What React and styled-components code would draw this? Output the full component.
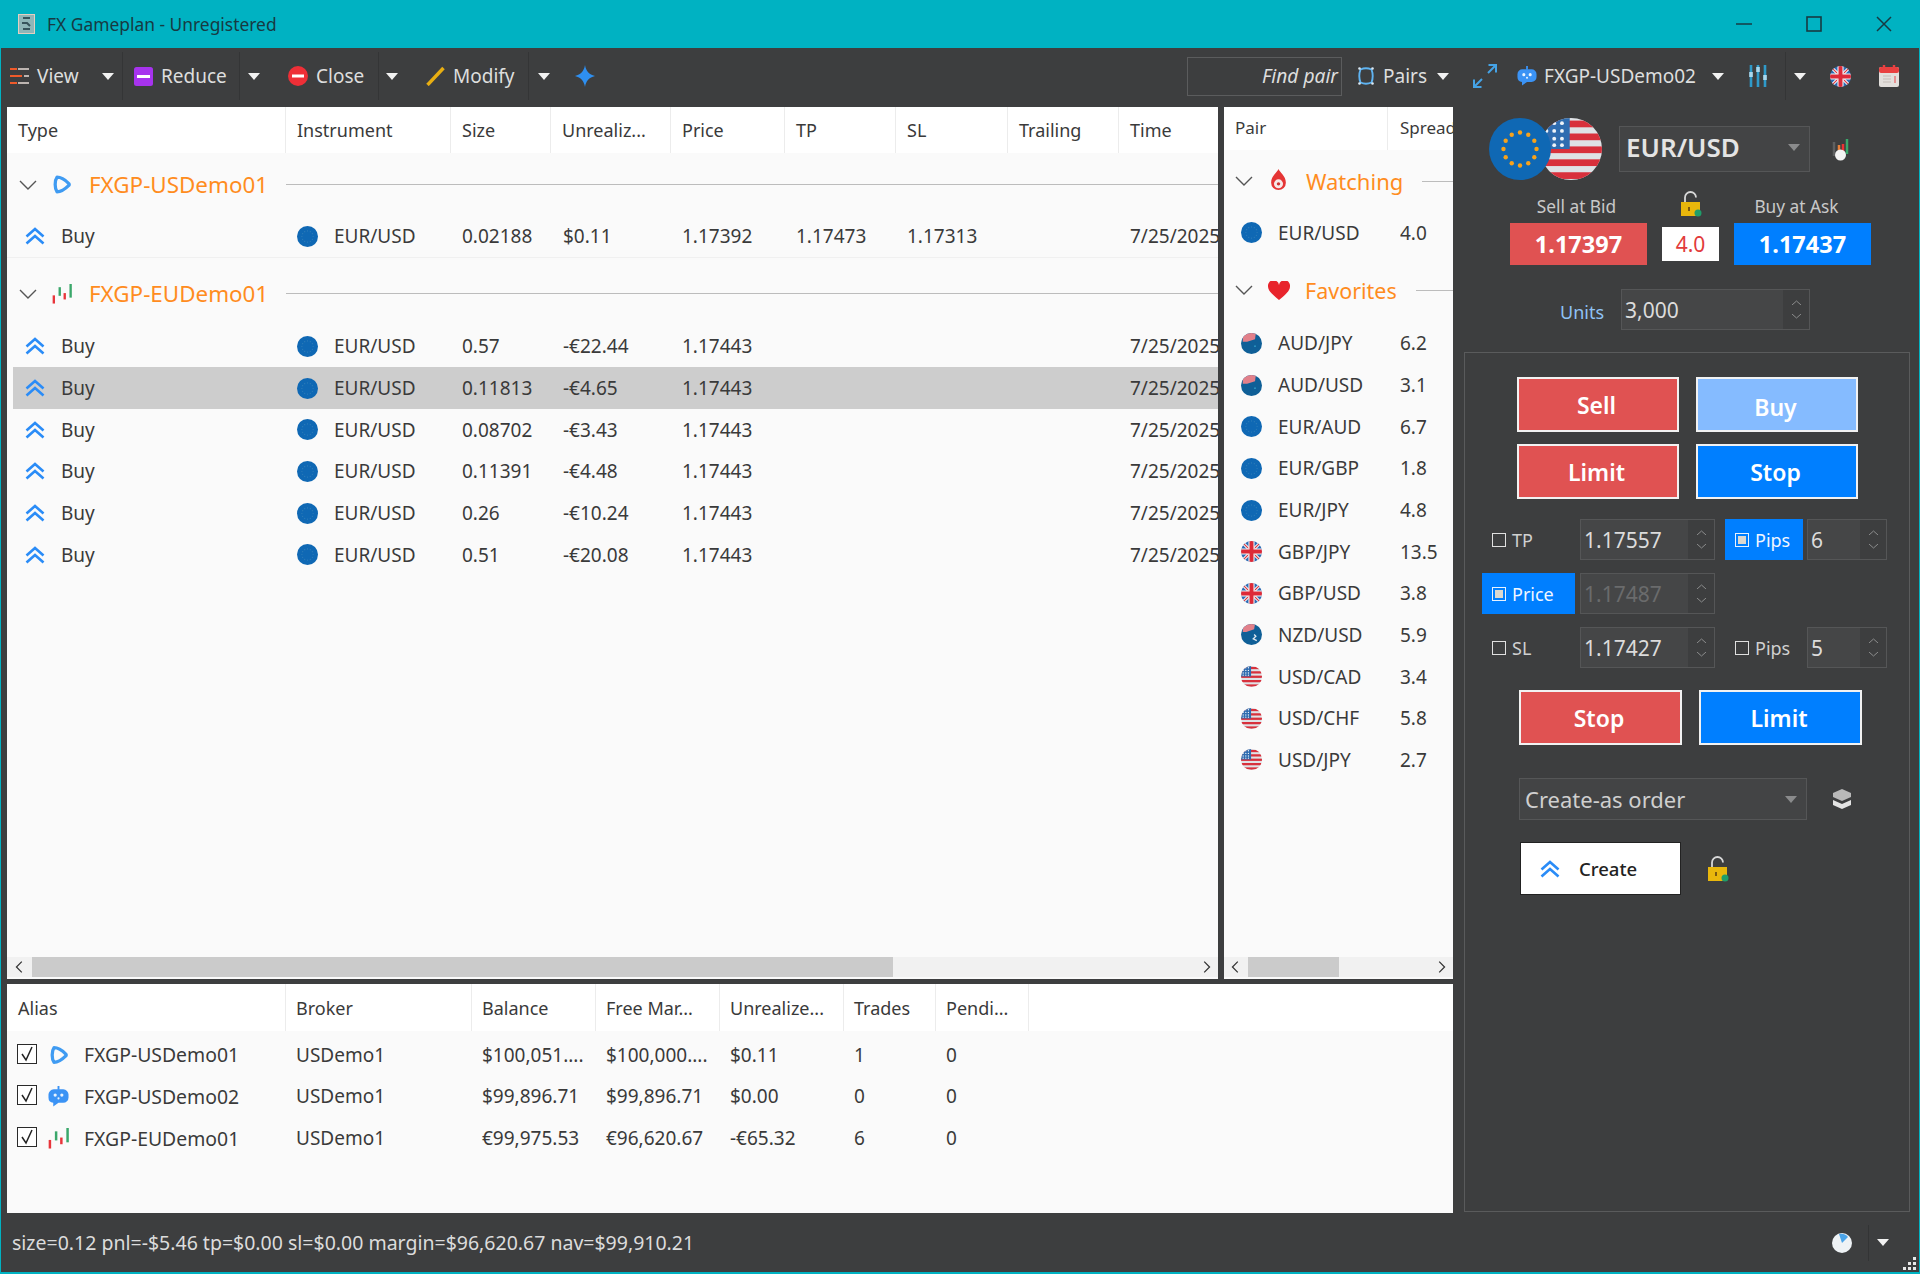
import React from 'react';
import styled, { createGlobalStyle } from 'styled-components';

const GlobalStyle = createGlobalStyle`
  html, body { margin: 0; padding: 0; background: #00b2c2; }
  * { box-sizing: border-box; }
  body { font-family: "Noto Sans", "Open Sans", sans-serif; }
`;

const Root = styled.div`
  width: 1920px;
  height: 1274px;
  background: #00b2c2;
  padding: 0 1px 2px 1px;
  display: flex;
  flex-direction: column;
  overflow: hidden;
`;

const TitleBar = styled.div`
  height: 48px;
  flex: none;
  display: flex;
  align-items: center;
  padding-left: 17px;
  color: #173a42;
  font-size: 17.4px;
`;

const TitleText = styled.span`
  margin-left: 12px;
  white-space: nowrap;
  margin-right: auto;
`;

const WinButton = styled.div`
  flex: none;
  width: 70px;
  display: flex;
  justify-content: center;
`;

const Window = styled.div`
  flex: 1;
  min-height: 0;
  background: #3d3e3f;
  display: flex;
  flex-direction: column;
  color: #dedede;
`;

const Toolbar = styled.div`
  height: 58px;
  flex: none;
  display: flex;
  align-items: center;
  font-size: 19px;
  padding-bottom: 2px;
`;

const ToolButton = styled.div`
  flex: none;
  height: 48px;
  display: flex;
  align-items: center;
  width: ${p => (p.$w ? `${p.$w}px` : 'auto')};
  margin-left: ${p => p.$ml || 0}px;
  padding-left: ${p => p.$pl || 0}px;
  gap: ${p => p.$gap ?? 8}px;
  border-right: ${p => (p.$sep ? '1px solid #343536' : 'none')};
`;

const Caret = styled.span`
  flex: none;
  width: 0;
  height: 0;
  border-left: 6px solid transparent;
  border-right: 6px solid transparent;
  border-top: 7px solid ${p => p.$color || '#f2f2f2'};
  margin-left: ${p => p.$ml || 0}px;
`;

const FindPair = styled.div`
  width: 155px;
  height: 39px;
  margin-left: 592px;
  border: 1px solid #5b5c5d;
  font-style: italic;
  font-size: 19.2px;
  text-align: right;
  line-height: 36px;
  padding-right: 3px;
  flex: none;
`;

const Main = styled.div`
  flex: 1;
  min-height: 0;
  display: flex;
`;

const Tables = styled.div`
  width: 1452px;
  flex: none;
  padding-left: 6px;
  padding-top: 1px;
  display: flex;
  flex-direction: column;
  gap: 5px;
`;

const TopTables = styled.div`
  height: 872px;
  flex: none;
  display: flex;
  gap: 6px;
`;

const Panel = styled.div`
  background: #fafafa;
  color: #3a3a3a;
  display: flex;
  flex-direction: column;
  overflow: hidden;
  width: ${p => (p.$w ? `${p.$w}px` : 'auto')};
  flex: ${p => (p.$w ? 'none' : '1')};
  font-size: 19px;
  min-height: 0;
`;

const HeadRow = styled.div`
  height: ${p => p.$h}px;
  flex: none;
  display: flex;
  background: #fff;
`;

const HeadCell = styled.div`
  flex: none;
  width: ${p => p.$w}px;
  padding-left: ${p => p.$pl ?? 11}px;
  padding-bottom: ${p => p.$pb || 0}px;
  display: flex;
  align-items: center;
  border-right: ${p => (p.$last ? 'none' : '1px solid #ececec')};
  white-space: nowrap;
  overflow: hidden;
  font-size: ${p => p.$size || 18}px;
  color: #3a3a3a;
`;

const Body = styled.div`
  flex: 1;
  min-height: 0;
  overflow: hidden;
  padding-top: ${p => p.$pt || 0}px;
`;

const GroupRow = styled.div`
  height: ${p => p.$h}px;
  padding-left: ${p => p.$pl}px;
  padding-top: ${p => p.$pt || 0}px;
  display: flex;
  align-items: center;
`;

const GroupIcon = styled.div`
  flex: none;
  display: flex;
  justify-content: center;
  width: ${p => p.$w}px;
  margin-left: ${p => p.$ml}px;
`;

const GroupLabel = styled.span`
  color: #ff8c1e;
  font-size: ${p => p.$size}px;
  margin-left: ${p => p.$ml}px;
  white-space: nowrap;
`;

const GroupLine = styled.div`
  flex: 1;
  height: 1px;
  background: #bcbcbc;
  margin-left: ${p => p.$ml}px;
`;

const AccountName = styled.span`
  font-size: 19.4px;
  margin-left: 15px;
`;

const Row = styled.div`
  height: 41.65px;
  display: flex;
  align-items: center;
  background: ${p => (p.$selected ? '#cdcdcd' : 'transparent')};
  border-bottom: ${p => (p.$rule ? '1px solid #f0f0f0' : 'none')};
  margin-left: ${p => p.$ml || 0}px;
`;

const Cell = styled.div`
  flex: none;
  width: ${p => p.$w}px;
  padding-left: ${p => p.$pl ?? 11}px;
  display: flex;
  align-items: center;
  gap: ${p => p.$gap || 0}px;
  white-space: nowrap;
  overflow: hidden;
`;

const ScrollBar = styled.div`
  height: 20px;
  flex: none;
  margin-bottom: 2px;
  display: flex;
  align-items: center;
  background: #f1f1f1;
`;

const ScrollEnd = styled.div`
  width: ${p => p.$w}px;
  flex: none;
  display: flex;
  justify-content: center;
`;

const ScrollThumb = styled.div`
  height: 100%;
  width: ${p => p.$w}px;
  background: #cbcbcb;
  flex: none;
`;

const ScrollRest = styled.div`
  flex: 1;
`;

const Check = styled.div`
  flex: none;
  width: 20px;
  height: 20px;
  border: 1.5px solid #2a2a2a;
  background: #fff;
  display: flex;
  align-items: center;
  justify-content: center;
  margin-top: -2px;
`;

const Ticket = styled.div`
  flex: 1;
  min-width: 0;
  padding-left: 11px;
  display: flex;
  flex-direction: column;
`;

const PairRow = styled.div`
  display: flex;
  align-items: center;
  height: 62px;
  margin-top: 12px;
  padding-left: 25px;
`;

const FlagPair = styled.div`
  display: flex;
  width: 113px;
  flex: none;
`;

const FlagOver = styled.div`
  flex: none;
  margin-right: -11px;
  z-index: 1;
`;

const Combo = styled.div`
  flex: none;
  height: ${p => p.$h}px;
  width: ${p => p.$w}px;
  margin-left: ${p => p.$ml || 0}px;
  border: 1px solid #555657;
  background: #434445;
  display: flex;
  align-items: center;
  justify-content: space-between;
  padding: 0 9px ${p => p.$pb || 0}px ${p => p.$pl ?? 6}px;
  font-size: ${p => p.$size}px;
  font-weight: ${p => p.$weight || 400};
  color: ${p => p.$color || '#e4e4e4'};
`;

const IconSlot = styled.div`
  flex: none;
  display: flex;
  margin-left: ${p => p.$ml}px;
  margin-bottom: ${p => p.$mb || 0}px;
`;

const QuoteHead = styled.div`
  display: grid;
  grid-template-columns: 137px 57px 137px;
  column-gap: 15px;
  margin-left: 46px;
  height: 43px;
  padding-top: 9px;
  align-items: center;
  font-size: 17.3px;
  color: #c9c9c9;
  justify-items: center;
`;

const QuoteLabel = styled.span`
  margin-right: ${p => p.$mr}px;
`;

const QuoteRow = styled.div`
  display: grid;
  grid-template-columns: 137px 57px 137px;
  column-gap: 15px;
  margin-left: 46px;
  height: 42px;
  align-items: center;
`;

const QuoteBox = styled.div`
  height: ${p => (p.$spread ? 34 : 42)}px;
  background: ${p => (p.$spread ? '#fff' : p.$color)};
  color: ${p => (p.$spread ? '#e23b3b' : '#fff')};
  font-size: ${p => (p.$spread ? 21 : 23.5)}px;
  font-weight: ${p => (p.$spread ? 400 : 700)};
  display: flex;
  align-items: center;
  justify-content: center;
`;

const UnitsRow = styled.div`
  display: flex;
  align-items: center;
  height: 41px;
  margin-top: 24px;
  padding-left: 96px;
`;

const UnitsLabel = styled.span`
  color: #8fc2f5;
  font-size: 18px;
  width: 61px;
  padding-top: 5px;
`;

const Spin = styled.div`
  flex: none;
  width: ${p => p.$w}px;
  height: 41px;
  margin-left: ${p => p.$ml || 0}px;
  border: 1px solid #555657;
  background: #454647;
  display: flex;
  font-size: 21px;
  color: ${p => (p.$off ? '#6a6b6c' : '#dcdcdc')};
`;

const SpinValue = styled.div`
  flex: 1;
  display: flex;
  align-items: center;
  padding-left: 3px;
`;

const SpinArrows = styled.div`
  width: 26px;
  flex: none;
  background: #3d3e3f;
  display: flex;
  flex-direction: column;
  align-items: center;
  justify-content: center;
  gap: 9px;
`;

const GroupBox = styled.div`
  flex: 1;
  width: 446px;
  margin-top: 22px;
  margin-bottom: 1px;
  border: 1px solid #5a5b5c;
  display: flex;
  flex-direction: column;
`;

const TradeGrid = styled.div`
  display: grid;
  grid-template-columns: 162px 162px;
  grid-auto-rows: 55px;
  column-gap: 17px;
  row-gap: 12px;
  margin-top: 24px;
  margin-left: 52px;
`;

const TradeButton = styled.div`
  background: ${p => p.$color};
  border: 2px solid #f2f2f2;
  color: #fff;
  font-size: 23px;
  font-weight: 600;
  display: flex;
  align-items: center;
  justify-content: center;
  padding-top: ${p => p.$pt || 0}px;
  padding-right: 3px;
`;

const ExitRow = styled.div`
  display: flex;
  height: 55px;
  gap: 17px;
  margin-top: 22px;
  margin-left: 54px;
`;

const ExitButton = styled(TradeButton)`
  width: 163px;
`;

const FieldRows = styled.div`
  display: flex;
  flex-direction: column;
  gap: 13px;
  margin-top: 20px;
  margin-left: 17px;
`;

const FieldRow = styled.div`
  display: flex;
  height: 41px;
  align-items: center;
`;

const Toggle = styled.div`
  flex: none;
  width: ${p => p.$w}px;
  height: 41px;
  margin-left: ${p => p.$ml || 0}px;
  padding-left: 10px;
  display: flex;
  align-items: center;
  gap: 6px;
  font-size: 18px;
  background: ${p => (p.$on ? '#007fff' : 'transparent')};
  color: ${p => (p.$on ? '#f0f6ff' : '#d0d0d0')};
`;

const Box = styled.span`
  flex: none;
  width: 14px;
  height: 14px;
  border: 1.5px solid ${p => (p.$on ? '#e8f2ff' : '#e0e0e0')};
  padding: 2px;
  display: block;
`;

const BoxDot = styled.span`
  display: block;
  width: 100%;
  height: 100%;
  background: #dcd8cf;
`;

const OrderTypeRow = styled.div`
  display: flex;
  align-items: center;
  margin-top: 33px;
  margin-left: 54px;
`;

const CreateRow = styled.div`
  display: flex;
  align-items: center;
  margin-top: 22px;
  margin-left: 55px;
`;

const CreateButton = styled.div`
  width: 161px;
  height: 53px;
  flex: none;
  background: #fff;
  border: 1px solid #222;
  color: #222;
  font-size: 18.5px;
  font-weight: 500;
  display: flex;
  align-items: center;
  padding-left: 19px;
  gap: 19px;
`;

const StatusBar = styled.div`
  height: 59px;
  flex: none;
  display: flex;
  align-items: center;
  padding: 0 2px 0 11px;
  font-size: 19.5px;
  color: #dcdcdc;
`;

const StatusText = styled.span`
  flex: 1;
`;

const StatusDivider = styled.div`
  width: 1px;
  height: 36px;
  background: #333435;
  margin-left: 16px;
  margin-right: 8px;
`;

const Grip = styled.div`
  flex: none;
  align-self: flex-end;
  margin-left: 13px;
  margin-bottom: 1px;
  display: flex;
`;

const Chevron = ({ dir = 'down', size = 18, color = '#555' }) => {
  const d = { down: 'M1 5l8 8 8-8', left: 'M11 3L5 9l6 6', right: 'M7 3l6 6-6 6' }[dir];
  return (
    <svg width={size} height={size} viewBox="0 0 18 18" fill="none" stroke={color} strokeWidth="1.4">
      <path d={d} />
    </svg>
  );
};

const BuyIcon = () => (
  <svg width="20" height="18" viewBox="0 0 20 18" fill="none" stroke="#2a8cf7" strokeWidth="2.6">
    <path d="M1.5 9.5L10 2l8.5 7.5M1.5 16.5L10 9l8.5 7.5" />
  </svg>
);

const PlayIcon = ({ size = 23 }) => (
  <svg width={size} height={size} viewBox="0 0 22 22" fill="none" stroke="#3f9bf2" strokeWidth="3.6" strokeLinejoin="round">
    <path d="M5.5 3c5 0 9 3 13 7 .6.7.6 1.5 0 2-4 4-8 7-13 7-1.500-2-2-5-2-8s.5-6 2-8z" />
  </svg>
);

const CandlesIcon = ({ size = 22 }) => (
  <svg width={size} height={size} viewBox="0 0 22 22" fill="none" strokeWidth="2.6">
    <path d="M2 12.5v9" stroke="#e8353b" />
    <path d="M8.5 3.5V13" stroke="#3aa76a" />
    <path d="M14 10v7" stroke="#e8353b" />
    <path d="M20.5 0v15" stroke="#3aa76a" />
  </svg>
);

const RobotIcon = ({ size = 22 }) => (
  <svg width={size} height={size} viewBox="0 0 22 22">
    <path d="M11 0v4" stroke="#3b93f5" strokeWidth="2" />
    <path d="M6 3.5h10a5.5 5.5 0 0 1 5.5 5.5v3a5.5 5.5 0 0 1-5.5 5.5h-5l-5.5 4v-4A5.5 5.5 0 0 1 .5 12V9A5.5 5.5 0 0 1 6 3.5z" fill="#3b93f5" />
    <circle cx="7.5" cy="9.5" r="1.7" fill="#e8f3ff" />
    <circle cx="14.5" cy="9.5" r="1.7" fill="#e8f3ff" />
    <circle cx="11" cy="13" r="1.1" fill="#e8f3ff" />
  </svg>
);

const Stars = ({ color, r }) => (
  <>
    {Array.from({ length: 12 }).map((_, i) => {
      const a = (i * Math.PI) / 6;
      return <circle key={i} cx={12 + 6.4 * Math.cos(a)} cy={12 + 6.4 * Math.sin(a)} r={r} fill={color} />;
    })}
  </>
);

const UnionJack = () => (
  <>
    <path d="M0 0l24 24M24 0L0 24" stroke="#f4f4f4" strokeWidth="3.5" />
    <path d="M0 0l24 24M24 0L0 24" stroke="#d8303c" strokeWidth="1.2" />
    <path d="M12 0v24M0 12h24" stroke="#f4f4f4" strokeWidth="7" />
    <path d="M12 0v24M0 12h24" stroke="#dd2a38" strokeWidth="4.5" />
  </>
);

const FlagSvg = styled.svg`
  display: block;
  flex: none;
  border-radius: 50%;
`;

const Flag = ({ kind, size = 21 }) => (
  <FlagSvg width={size} height={size} viewBox="0 0 24 24">
    {kind === 'eu' && (
      <>
        <rect width="24" height="24" fill="#0f68b4" />
        <Stars color={size > 30 ? '#f7a21b' : '#2f7db8'} r={size > 30 ? 0.85 : 0.7} />
      </>
    )}
    {kind === 'us' && (
      <>
        <rect width="24" height="24" fill="#dfe2e6" />
        {[1, 6, 11, 16, 21].map(y => (
          <rect key={y} y={y} width="24" height="2.6" fill="#d8303c" />
        ))}
        <rect width="11.5" height="12" fill="#2f6cb0" />
        {[2, 5, 8, 10.5].map(y => [2.5, 5.5, 8.5].map(x => <circle key={`${x}${y}`} cx={x} cy={y} r=".75" fill="#eef3f8" />))}
      </>
    )}
    {kind === 'uk' && (
      <>
        <rect width="24" height="24" fill="#2d6cb5" />
        <UnionJack />
      </>
    )}
    {kind === 'au' && (
      <>
        <rect width="24" height="24" fill="#0f5f97" />
        <path d="M2 0h15l-1 7-9 3H2z" fill="#e2808a" />
        <circle cx="16" cy="15" r="1" fill="#2f9bc4" />
      </>
    )}
    {kind === 'nz' && (
      <>
        <rect width="24" height="24" fill="#0f5f97" />
        <path d="M2 0h14l-1 6-9 3H2z" fill="#e2808a" />
        <path d="M15 12l2 2-3 3 4 2" stroke="#dfe8f0" strokeWidth="1.5" fill="none" />
      </>
    )}
  </FlagSvg>
);

const LockIcon = () => (
  <svg width="22" height="26" viewBox="0 0 22 26">
    <path d="M5 12V6.5a5.500 5.500 0 0 1 11 0" fill="none" stroke="#d8d8d8" strokeWidth="1.8" />
    <rect x="1" y="11" width="19" height="14" fill="#e9b70c" />
    <rect x="8" y="16" width="2" height="4" fill="#7c5a10" />
    <circle cx="18" cy="22" r="3.5" fill="#1f9d6a" />
  </svg>
);

const SpinArrow = ({ up }) => (
  <svg width="11" height="5" viewBox="0 0 11 5" fill="none" stroke="#8b8c8d" strokeWidth="1">
    <path d={up ? 'M1 5l4.5-4L10 5' : 'M1 0l4.5 4L10 0'} />
  </svg>
);

const SpinBox = ({ value, w, ml, off }) => (
  <Spin $w={w} $ml={ml} $off={off}>
    <SpinValue>{value}</SpinValue>
    <SpinArrows>
      <SpinArrow up />
      <SpinArrow />
    </SpinArrows>
  </Spin>
);

const Thumbed = ({ ends, thumb }) => (
  <ScrollBar>
    <ScrollEnd $w={ends}><Chevron dir="left" color="#333" size={16} /></ScrollEnd>
    <ScrollThumb $w={thumb} />
    <ScrollRest />
    <ScrollEnd $w={ends}><Chevron dir="right" color="#333" size={16} /></ScrollEnd>
  </ScrollBar>
);

const orderCols = [279, 165, 100, 120, 114, 111, 112, 111, 99];
const orderHead = ['Type', 'Instrument', 'Size', 'Unrealiz...', 'Price', 'TP', 'SL', 'Trailing', 'Time'];
const euOrders = [
  ['0.57', '-€22.44'],
  ['0.11813', '-€4.65'],
  ['0.08702', '-€3.43'],
  ['0.11391', '-€4.48'],
  ['0.26', '-€10.24'],
  ['0.51', '-€20.08'],
];

const OrderRow = ({ size, pnl, price, tp, sl, selected, rule }) => (
  <Row $selected={selected} $rule={rule} $ml={selected ? 6 : 0}>
    <Cell $w={orderCols[0] - (selected ? 6 : 0)} $pl={selected ? 12 : 18} $gap={16}><BuyIcon />Buy</Cell>
    <Cell $w={orderCols[1]} $gap={16}><Flag kind="eu" />EUR/USD</Cell>
    <Cell $w={orderCols[2]}>{size}</Cell>
    <Cell $w={orderCols[3]} $pl={12}>{pnl}</Cell>
    <Cell $w={orderCols[4]}>{price}</Cell>
    <Cell $w={orderCols[5]}>{tp}</Cell>
    <Cell $w={orderCols[6]}>{sl}</Cell>
    <Cell $w={orderCols[7]} />
    <Cell $w={orderCols[8]}>7/25/2025</Cell>
  </Row>
);

const watching = [['eu', 'EUR/USD', '4.0']];
const favorites = [
  ['au', 'AUD/JPY', '6.2'],
  ['au', 'AUD/USD', '3.1'],
  ['eu', 'EUR/AUD', '6.7'],
  ['eu', 'EUR/GBP', '1.8'],
  ['eu', 'EUR/JPY', '4.8'],
  ['uk', 'GBP/JPY', '13.5'],
  ['uk', 'GBP/USD', '3.8'],
  ['nz', 'NZD/USD', '5.9'],
  ['us', 'USD/CAD', '3.4'],
  ['us', 'USD/CHF', '5.8'],
  ['us', 'USD/JPY', '2.7'],
];

const PairItem = ({ kind, name, spread }) => (
  <Row>
    <Cell $w={176} $pl={17} $gap={16}><Flag kind={kind} />{name}</Cell>
    <Cell $w={53} $pl={0}>{spread}</Cell>
  </Row>
);

const accountCols = [279, 186, 124, 124, 124, 92, 93];
const accountHead = ['Alias', 'Broker', 'Balance', 'Free Mar...', 'Unrealize...', 'Trades', 'Pendi...'];
const accounts = [
  [<PlayIcon key="i" size={20} />, 'FXGP-USDemo01', 'USDemo1', '$100,051....', '$100,000....', '$0.11', '1', '0'],
  [<RobotIcon key="i" size={21} />, 'FXGP-USDemo02', 'USDemo1', '$99,896.71', '$99,896.71', '$0.00', '0', '0'],
  [<CandlesIcon key="i" size={21} />, 'FXGP-EUDemo01', 'USDemo1', '€99,975.53', '€96,620.67', '-€65.32', '6', '0'],
];

export default function App() {
  return (
    <Root>
      <GlobalStyle />
      <TitleBar>
        <svg width="17" height="20" viewBox="0 0 17 20">
          <rect x=".5" y=".5" width="16" height="19" fill="#8fb6b8" stroke="#e4cfc0" />
          <path d="M5 4h7M4 9h5l3 3M5 15h7" stroke="#37545c" strokeWidth="2" fill="none" />
        </svg>
        <TitleText>FX Gameplan - Unregistered</TitleText>
        <WinButton>
          <svg width="16" height="4" viewBox="0 0 16 4"><path d="M0 2h16" stroke="#173a42" strokeWidth="1.5" /></svg>
        </WinButton>
        <WinButton>
          <svg width="16" height="16" viewBox="0 0 16 16"><rect x="1" y="1" width="14" height="14" fill="none" stroke="#173a42" strokeWidth="1.6" /></svg>
        </WinButton>
        <WinButton>
          <svg width="16" height="16" viewBox="0 0 16 16"><path d="M1 1l14 14M15 1L1 15" stroke="#173a42" strokeWidth="1.5" /></svg>
        </WinButton>
      </TitleBar>
      <Window>
        <Toolbar>
          <ToolButton $w={122} $pl={9} $gap={8} $sep>
            <svg width="19" height="18" viewBox="0 0 19 18">
              <path d="M8 2h11M14 9h5M8 16h11" stroke="#e6dcd6" strokeWidth="1.6" />
              <path d="M0 2h7M0 9h12M0 16h7" stroke="#ef5a2a" strokeWidth="2" />
            </svg>
            View
            <Caret $ml={15} />
          </ToolButton>
          <ToolButton $w={117} $pl={11} $sep>
            <svg width="19" height="19" viewBox="0 0 19 19">
              <rect width="19" height="19" rx="2.5" fill="#a733ee" />
              <rect x="3" y="8" width="13" height="3" fill="#fff" />
            </svg>
            Reduce
          </ToolButton>
          <ToolButton $w={37} $pl={8}><Caret /></ToolButton>
          <ToolButton $w={102} $pl={11} $sep>
            <svg width="20" height="20" viewBox="0 0 20 20">
              <circle cx="10" cy="10" r="10" fill="#ee2f37" />
              <rect x="4" y="8.5" width="12" height="3" fill="#fff" />
            </svg>
            Close
          </ToolButton>
          <ToolButton $w={36} $pl={7}><Caret /></ToolButton>
          <ToolButton $w={114} $pl={11} $sep>
            <svg width="19" height="20" viewBox="0 0 19 20">
              <path d="M1.5 19L17.5 2" stroke="#e8ae12" strokeWidth="3.4" />
            </svg>
            Modify
          </ToolButton>
          <ToolButton $w={37} $pl={9}><Caret /></ToolButton>
          <ToolButton $pl={9}>
            <svg width="20" height="22" viewBox="0 0 20 22">
              <path d="M10 0c1 6 4 9.500 10 11-6 1.500-9 5-10 11-1-6-4-9.500-10-11 6-1.500 9-5 10-11z" fill="#2e8ff0" />
            </svg>
          </ToolButton>
          <FindPair>Find pair</FindPair>
          <ToolButton $ml={15} $gap={8}>
            <svg width="18" height="20" viewBox="0 0 18 20" fill="none">
              <path d="M3.5 3.5c3.500-1.500 7.500-1.500 11 0 1.500 4 1.500 9 0 13-3.500 1.500-7.500 1.500-11 0-1.500-4-1.500-9 0-13z" stroke="#5fb4f2" strokeWidth="1.9" />
              <g fill="#dbe9f4">
                <circle cx="2.5" cy="2.5" r="1.3" />
                <circle cx="15.5" cy="2.5" r="1.3" />
                <circle cx="2.5" cy="17.5" r="1.3" />
                <circle cx="15.5" cy="17.5" r="1.3" />
              </g>
            </svg>
            Pairs
            <Caret $ml={2} />
          </ToolButton>
          <ToolButton $ml={23}>
            <svg width="26" height="26" viewBox="0 0 26 26" fill="none" stroke="#45a3e6" strokeWidth="2">
              <path d="M16 10l8-8M16.5 2H24v7.5M10 16l-8 8M9.5 24H2v-7.5" />
            </svg>
          </ToolButton>
          <ToolButton $ml={19} $gap={7}>
            <RobotIcon size={20} />
            FXGP-USDemo02
            <Caret $ml={9} />
          </ToolButton>
          <ToolButton $ml={24} $w={38} $sep>
            <svg width="20" height="24" viewBox="0 0 20 24" fill="none">
              <path d="M3 1v22M10 1v22M17 1v22" stroke="#2f9ac9" strokeWidth="2.6" />
              <path d="M3 8v5M10 3v5M17 11v5" stroke="#a9d8ee" strokeWidth="3.6" />
            </svg>
          </ToolButton>
          <ToolButton $w={38} $pl={8} $gap={0}>
            <Caret />
          </ToolButton>
          <ToolButton $ml={6}><Flag kind="uk" size={21} /></ToolButton>
          <ToolButton $ml={28}>
            <svg width="20" height="22" viewBox="0 0 20 22">
              <rect y="2" width="20" height="20" rx="2" fill="#e3dfdc" />
              <rect y="2" width="20" height="6" rx="2" fill="#e94040" />
              <path d="M5 0v4M15 0v4" stroke="#e94040" strokeWidth="2.4" />
              <path d="M4 11h8M4 14h8M4 17h8" stroke="#cfc9c4" strokeWidth="1.4" />
              <path d="M16 11v7" stroke="#e9787a" strokeWidth="1.5" />
            </svg>
          </ToolButton>
        </Toolbar>
        <Main>
          <Tables>
            <TopTables>
              <Panel $w={1211}>
                <HeadRow $h={46}>
                  {orderHead.map((h, i) => (
                    <HeadCell key={h} $w={orderCols[i]} $last={i === 8}>{h}</HeadCell>
                  ))}
                </HeadRow>
                <Body>
                  <GroupRow $h={63} $pl={12}>
                    <Chevron />
                    <GroupIcon $w={20} $ml={15}><PlayIcon /></GroupIcon>
                    <GroupLabel $size={22.4} $ml={17}>FXGP-USDemo01</GroupLabel>
                    <GroupLine $ml={18} />
                  </GroupRow>
                  <OrderRow size="0.02188" pnl="$0.11" price="1.17392" tp="1.17473" sl="1.17313" rule />
                  <GroupRow $h={68} $pl={12} $pt={4}>
                    <Chevron />
                    <GroupIcon $w={20} $ml={15}><CandlesIcon /></GroupIcon>
                    <GroupLabel $size={22.4} $ml={17}>FXGP-EUDemo01</GroupLabel>
                    <GroupLine $ml={18} />
                  </GroupRow>
                  {euOrders.map(([size, pnl], i) => (
                    <OrderRow key={size} size={size} pnl={pnl} price="1.17443" selected={i === 1} />
                  ))}
                </Body>
                <Thumbed ends={25} thumb={861} />
              </Panel>
              <Panel $w={229}>
                <HeadRow $h={43}>
                  <HeadCell $w={164} $size={17} $pb={2}>Pair</HeadCell>
                  <HeadCell $w={65} $pl={12} $size={17} $pb={2} $last>Spread</HeadCell>
                </HeadRow>
                <Body>
                  <GroupRow $h={62} $pl={11}>
                    <Chevron />
                    <GroupIcon $w={17} $ml={17}>
                      <svg width="17" height="24" viewBox="0 0 15 21">
                        <path d="M7.5 0c1 3 6.500 6 6.500 12a6.500 6.500 0 0 1-13 0c0-6 5.500-9 6.500-12z" fill="#e53535" />
                        <circle cx="7.5" cy="13" r="4" fill="#f6e8e8" />
                        <circle cx="7.5" cy="13" r="1.5" fill="#c33" />
                      </svg>
                    </GroupIcon>
                    <GroupLabel $size={22} $ml={19}>Watching</GroupLabel>
                    <GroupLine $ml={19} />
                  </GroupRow>
                  {watching.map(([kind, name, spread]) => <PairItem key={name} kind={kind} name={name} spread={spread} />)}
                  <GroupRow $h={69} $pl={11} $pt={4}>
                    <Chevron />
                    <GroupIcon $w={22} $ml={15}>
                      <svg width="22" height="19" viewBox="0 0 22 19">
                        <path d="M11 19C5 14 0 10 0 5.500A5.500 5.500 0 0 1 11 4a5.500 5.500 0 0 1 11 1.500C22 10 17 14 11 19z" fill="#e8242c" />
                      </svg>
                    </GroupIcon>
                    <GroupLabel $size={21.5} $ml={15}>Favorites</GroupLabel>
                    <GroupLine $ml={19} />
                  </GroupRow>
                  {favorites.map(([kind, name, spread]) => <PairItem key={name} kind={kind} name={name} spread={spread} />)}
                </Body>
                <Thumbed ends={24} thumb={91} />
              </Panel>
            </TopTables>
            <Panel>
              <HeadRow $h={47}>
                {accountHead.map((h, i) => (
                  <HeadCell key={h} $w={accountCols[i]} $pl={i === 0 ? 11 : 10}>{h}</HeadCell>
                ))}
              </HeadRow>
              <Body $pt={3}>
                {accounts.map(([icon, alias, broker, balance, free, pnl, trades, pending]) => (
                  <Row key={alias}>
                    <Cell $w={accountCols[0]} $pl={10}>
                      <Check>
                        <svg width="14" height="16" viewBox="0 0 14 16" fill="none" stroke="#222" strokeWidth="1.5">
                          <path d="M2 8l4 6 6-13" />
                        </svg>
                      </Check>
                      <GroupIcon $w={21} $ml={11}>{icon}</GroupIcon>
                      <AccountName>{alias}</AccountName>
                    </Cell>
                    <Cell $w={accountCols[1]} $pl={10}>{broker}</Cell>
                    <Cell $w={accountCols[2]} $pl={10}>{balance}</Cell>
                    <Cell $w={accountCols[3]} $pl={10}>{free}</Cell>
                    <Cell $w={accountCols[4]} $pl={10}>{pnl}</Cell>
                    <Cell $w={accountCols[5]} $pl={10}>{trades}</Cell>
                    <Cell $w={accountCols[6]} $pl={10}>{pending}</Cell>
                  </Row>
                ))}
              </Body>
            </Panel>
          </Tables>
          <Ticket>
            <PairRow>
              <FlagPair>
                <FlagOver><Flag kind="eu" size={62} /></FlagOver>
                <Flag kind="us" size={62} />
              </FlagPair>
              <Combo $w={191} $h={46} $ml={17} $size={26} $weight={600} $pb={4}>
                EUR/USD
                <Caret $color="#8a8b8c" />
              </Combo>
              <IconSlot $ml={22}>
                <svg width="20" height="26" viewBox="0 0 20 26" fill="none" strokeWidth="2.5">
                  <path d="M2 6v14" stroke="#5f6061" />
                  <path d="M7 9v8" stroke="#e8803a" />
                  <path d="M11 8v8" stroke="#e33" />
                  <path d="M15 3v15" stroke="#3aa76a" />
                  <circle cx="8.5" cy="19" r="5.5" fill="#f4f4f4" stroke="none" />
                </svg>
              </IconSlot>
            </PairRow>
            <QuoteHead>
              <QuoteLabel $mr={4}>Sell at Bid</QuoteLabel>
              <IconSlot $ml={1} $mb={4}><LockIcon /></IconSlot>
              <QuoteLabel $mr={12}>Buy at Ask</QuoteLabel>
            </QuoteHead>
            <QuoteRow>
              <QuoteBox $color="#e05252">1.17397</QuoteBox>
              <QuoteBox $spread>4.0</QuoteBox>
              <QuoteBox $color="#007fff">1.17437</QuoteBox>
            </QuoteRow>
            <UnitsRow>
              <UnitsLabel>Units</UnitsLabel>
              <SpinBox value="3,000" w={189} />
            </UnitsRow>
            <GroupBox>
              <TradeGrid>
                <TradeButton $color="#e05252">Sell</TradeButton>
                <TradeButton $color="#85bbff" $pt={5}>Buy</TradeButton>
                <TradeButton $color="#e05252">Limit</TradeButton>
                <TradeButton $color="#007fff">Stop</TradeButton>
              </TradeGrid>
              <FieldRows>
                <FieldRow>
                  <Toggle $w={93}><Box />TP</Toggle>
                  <SpinBox value="1.17557" w={135} ml={5} />
                  <Toggle $w={78} $ml={10} $on><Box $on><BoxDot /></Box>Pips</Toggle>
                  <SpinBox value="6" w={80} ml={4} />
                </FieldRow>
                <FieldRow>
                  <Toggle $w={93} $on><Box $on><BoxDot /></Box>Price</Toggle>
                  <SpinBox value="1.17487" w={135} ml={5} off />
                </FieldRow>
                <FieldRow>
                  <Toggle $w={93}><Box />SL</Toggle>
                  <SpinBox value="1.17427" w={135} ml={5} />
                  <Toggle $w={78} $ml={10}><Box />Pips</Toggle>
                  <SpinBox value="5" w={80} ml={4} />
                </FieldRow>
              </FieldRows>
              <ExitRow>
                <ExitButton $color="#e05252">Stop</ExitButton>
                <ExitButton $color="#007fff">Limit</ExitButton>
              </ExitRow>
              <OrderTypeRow>
                <Combo $w={288} $h={42} $size={22} $pl={5} $color="#cfcfcf">
                  Create-as order
                  <Caret $color="#8a8b8c" />
                </Combo>
                <IconSlot $ml={25}>
                  <svg width="20" height="20" viewBox="0 0 20 20">
                    <path d="M10 0l9 4v4l-9 4-9-4V4z" fill="#b9b9b9" />
                    <path d="M1 11l9 4 9-4v5l-9 4-9-4z" fill="#e4e4e4" />
                  </svg>
                </IconSlot>
              </OrderTypeRow>
              <CreateRow>
                <CreateButton><BuyIcon />Create</CreateButton>
                <IconSlot $ml={26}><LockIcon /></IconSlot>
              </CreateRow>
            </GroupBox>
          </Ticket>
        </Main>
        <StatusBar>
          <StatusText>size=0.12 pnl=-$5.46 tp=$0.00 sl=$0.00 margin=$96,620.67 nav=$99,910.21</StatusText>
          <svg width="20" height="20" viewBox="0 0 20 20">
            <circle cx="10" cy="10" r="10" fill="#eef2f5" />
            <path d="M10 10L7 1a9 9 0 0 1 9 3z" fill="#4aa3e8" />
          </svg>
          <StatusDivider />
          <Caret />
          <Grip>
            <svg width="15" height="15" viewBox="0 0 15 15" fill="#e8e8e8">
              <rect x="11" y="1" width="3" height="3" />
              <rect x="6" y="6" width="3" height="3" />
              <rect x="11" y="6" width="3" height="3" />
              <rect x="1" y="11" width="3" height="3" />
              <rect x="6" y="11" width="3" height="3" />
              <rect x="11" y="11" width="3" height="3" />
            </svg>
          </Grip>
        </StatusBar>
      </Window>
    </Root>
  );
}
